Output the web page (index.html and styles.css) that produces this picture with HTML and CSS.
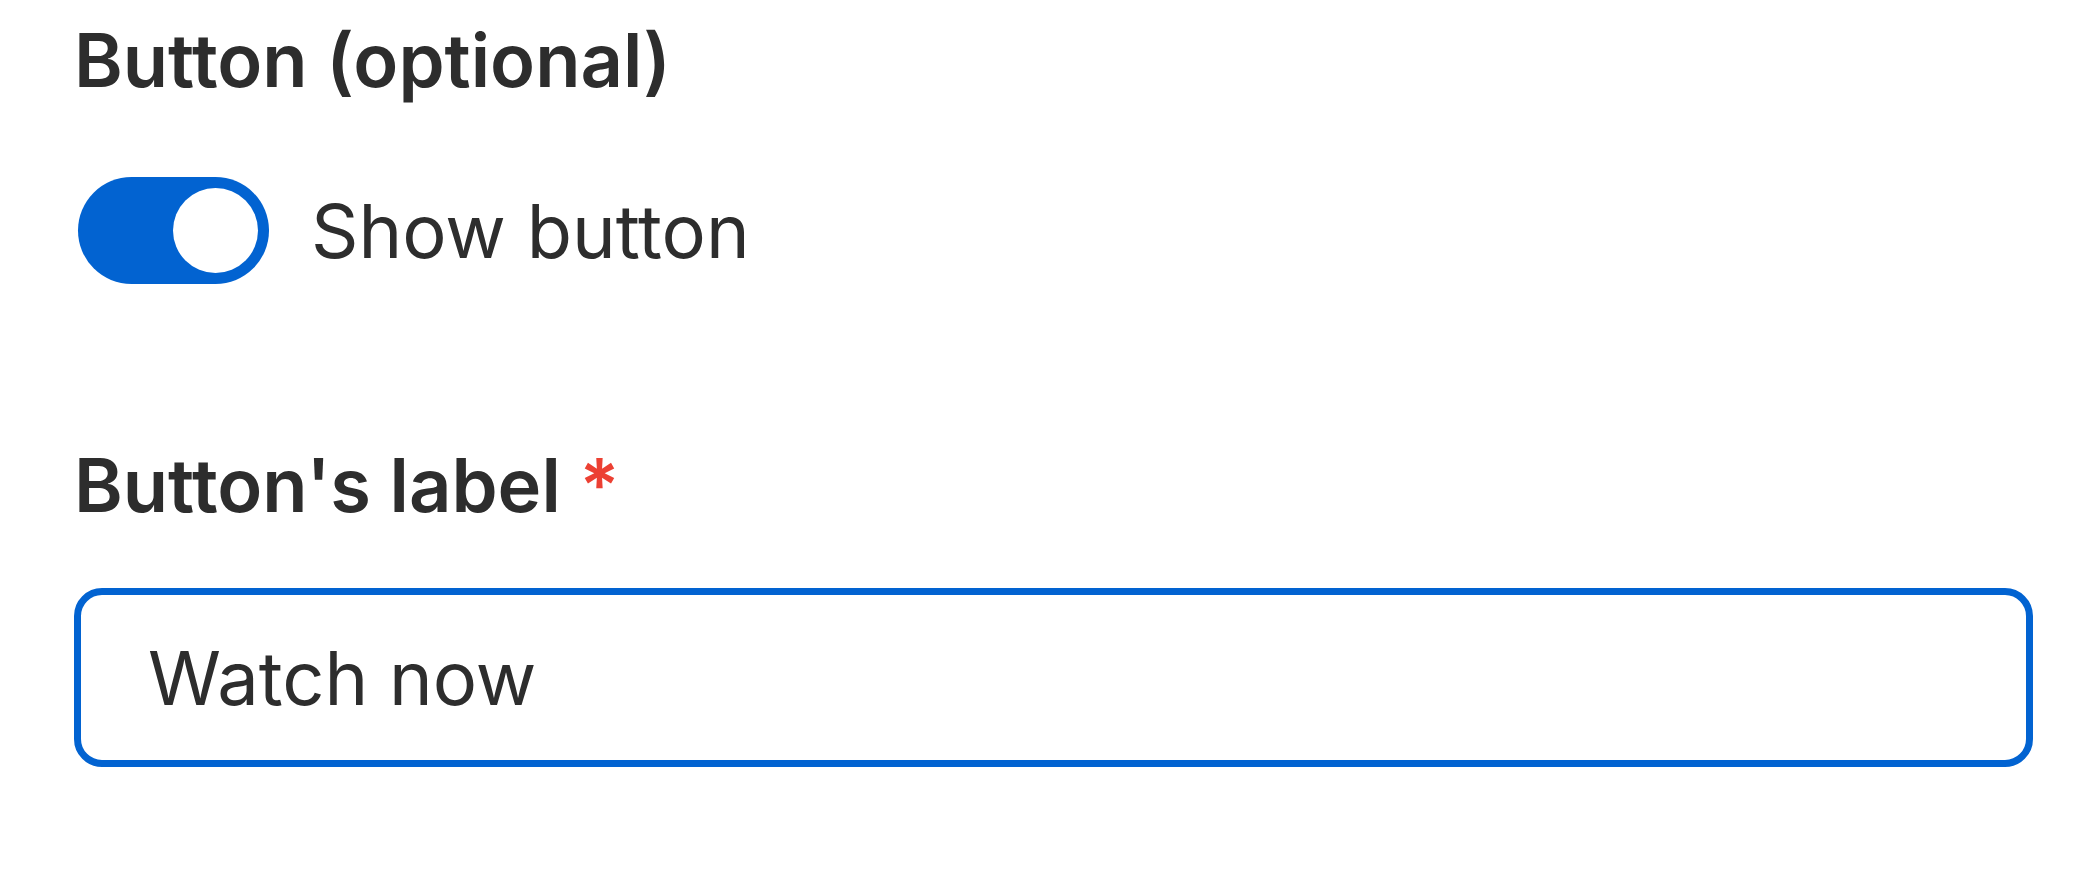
FILE: index.html
```html
<!DOCTYPE html>
<html lang="en">
<head>
    <meta charset="UTF-8">
    <meta name="viewport" content="width=device-width, initial-scale=1.0">
    <title>Button settings</title>
    <link rel="stylesheet" href="styles.css">
</head>
<body>
    <div class="form-panel">
        <h2 class="section-title">Button (optional)</h2>

        <label class="switch-row">
            <span class="switch is-on"><span class="switch-knob"></span></span>
            <span class="switch-text">Show button</span>
        </label>

        <div class="field">
            <label class="field-label" for="button-label">Button's label <span class="required">*</span></label>
            <input class="text-input" id="button-label" type="text" value="Watch now">
        </div>
    </div>
</body>
</html>
```

FILE: styles.css
```css
:root {
    --primary-color: #0263d1;
    --text-color: #2d2d2d;
    --danger-color: #ec4033;
}

body {
    margin: 0;
    background: #ffffff;
    color: var(--text-color);
    font-family: 'Inter', 'Noto Sans', sans-serif;
}

.form-panel {
    display: flex;
    flex-direction: column;
    padding: 14px 67px 0 74px;
}

.section-title {
    margin: 0;
    font-size: 74px;
    font-weight: 600;
    line-height: 92px;
}

.switch-row {
    display: flex;
    align-items: center;
    gap: 42px;
    margin: 71px 0 0 4px;
    cursor: pointer;
}

.switch {
    display: flex;
    align-items: center;
    justify-content: flex-end;
    box-sizing: border-box;
    width: 191px;
    height: 107px;
    padding: 0 11px;
    border-radius: 54px;
    background: var(--primary-color);
}

.switch-knob {
    width: 85px;
    height: 85px;
    border-radius: 50%;
    background: #ffffff;
}

.switch-text {
    font-size: 74px;
    line-height: 90px;
}

.field {
    display: flex;
    flex-direction: column;
    gap: 57px;
    margin-top: 155px;
}

.field-label {
    font-size: 74px;
    font-weight: 600;
    line-height: 92px;
}

.required {
    color: var(--danger-color);
}

.text-input {
    box-sizing: border-box;
    width: 100%;
    height: 179px;
    padding: 0 60px 0 67px;
    border: 7px solid var(--primary-color);
    border-radius: 28px;
    outline: none;
    font-family: inherit;
    font-size: 74px;
    color: var(--text-color);
}
```
